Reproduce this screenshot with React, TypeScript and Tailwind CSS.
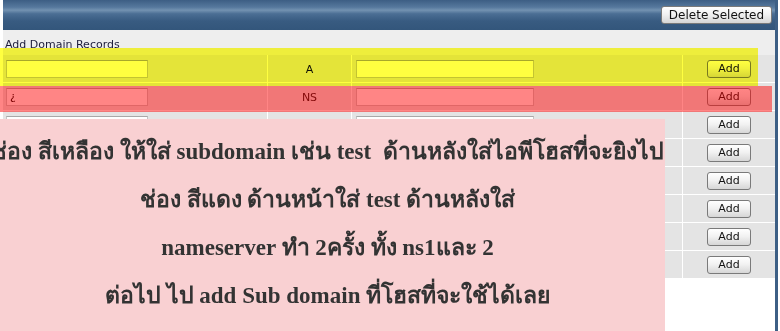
import React from 'react'

type Row = { type?: string; name?: string; value?: string }

const rows: Row[] = [
  { type: 'A' },
  { type: 'NS', name: '¿' },
  {},
  {},
  {},
  {},
  {},
  {},
]

const btn =
  "rounded-[3px] border border-[#7a7a7a] bg-[linear-gradient(to_bottom,#ffffff_0%,#f2f2f2_45%,#d6d6d6_100%)] text-[11px] leading-none text-[#111]"

const field =
  'h-[18px] border border-[#c4c4c4] border-t-[#a8a8a8] bg-white px-[3px] text-[11px] leading-[16px] text-black'

function RecordRow({ row }: { row: Row }) {
  return (
    <div className="grid h-[28px] grid-cols-[265px_84px_331px_92px] border-b border-white bg-[#e4e4e4]">
      <div className="flex items-center border-r border-white pl-[3px]">
        <div className={`${field} w-[142px]`}>{row.name}</div>
      </div>
      <div className="flex items-center justify-center border-r border-white pt-[3px] text-[11px] text-[#111]">
        {row.type}
      </div>
      <div className="flex items-center border-r border-white pl-[4px]">
        <div className={`${field} w-[178px]`}>{row.value}</div>
      </div>
      <div className="flex items-center justify-center">
        <button className={`${btn} h-[18px] w-[44px]`}>Add</button>
      </div>
    </div>
  )
}

export default function App() {
  return (
    <div className="relative h-[331px] w-[780px] overflow-hidden bg-white font-['DejaVu_Sans',Verdana,sans-serif]">
      <div className="ml-[3px] h-full w-[775px] border-r-[3px] border-[#3d5f85]">
        {/* title bar */}
        <div className="flex h-[30px] items-center justify-end bg-[linear-gradient(to_bottom,#3d5e84_0%,#56789d_24%,#7392b1_34%,#4b6e94_46%,#385b81_70%,#33567b_100%)] pr-[3px]">
          <button className={`${btn} h-[18px] w-[111px] text-[12px]`}>Delete Selected</button>
        </div>

        <div className="h-[25px] bg-[#eeeeee] pl-[2px] pt-[8px] text-[11px] leading-[13px] text-[#1c1c3a]">
          Add Domain Records
        </div>

        <div>
          {rows.map((r, i) => (
            <RecordRow key={i} row={r} />
          ))}
        </div>
      </div>

      {/* highlight overlays */}
      <div className="pointer-events-none absolute left-0 top-[48px] h-[38px] w-[758px] bg-[#ffff40] mix-blend-multiply" />
      <div className="pointer-events-none absolute left-0 top-[86px] h-[26px] w-[772px] bg-[rgba(255,0,0,0.48)]" />

      {/* note */}
      <div className="absolute left-0 top-[119px] h-[212px] w-[665px] bg-[#f9d0d2] pt-[9px] text-center font-['Liberation_Serif',serif] text-[23px] font-bold leading-[48px] text-[#333333]">
        <p className="-ml-[10px] whitespace-nowrap">ช่อง สีเหลือง ให้ใส่ subdomain เช่น test&nbsp; ด้านหลังใส่ไอพีโฮสที่จะยิงไป</p>
        <p className="-ml-[10px] whitespace-nowrap">ช่อง สีแดง ด้านหน้าใส่ test ด้านหลังใส่</p>
        <p className="-ml-[10px] whitespace-nowrap">nameserver ทำ 2ครั้ง ทั้ง ns1และ 2</p>
        <p className="-ml-[10px] whitespace-nowrap">ต่อไป ไป add Sub domain ที่โฮสที่จะใช้ได้เลย</p>
      </div>
    </div>
  )
}
